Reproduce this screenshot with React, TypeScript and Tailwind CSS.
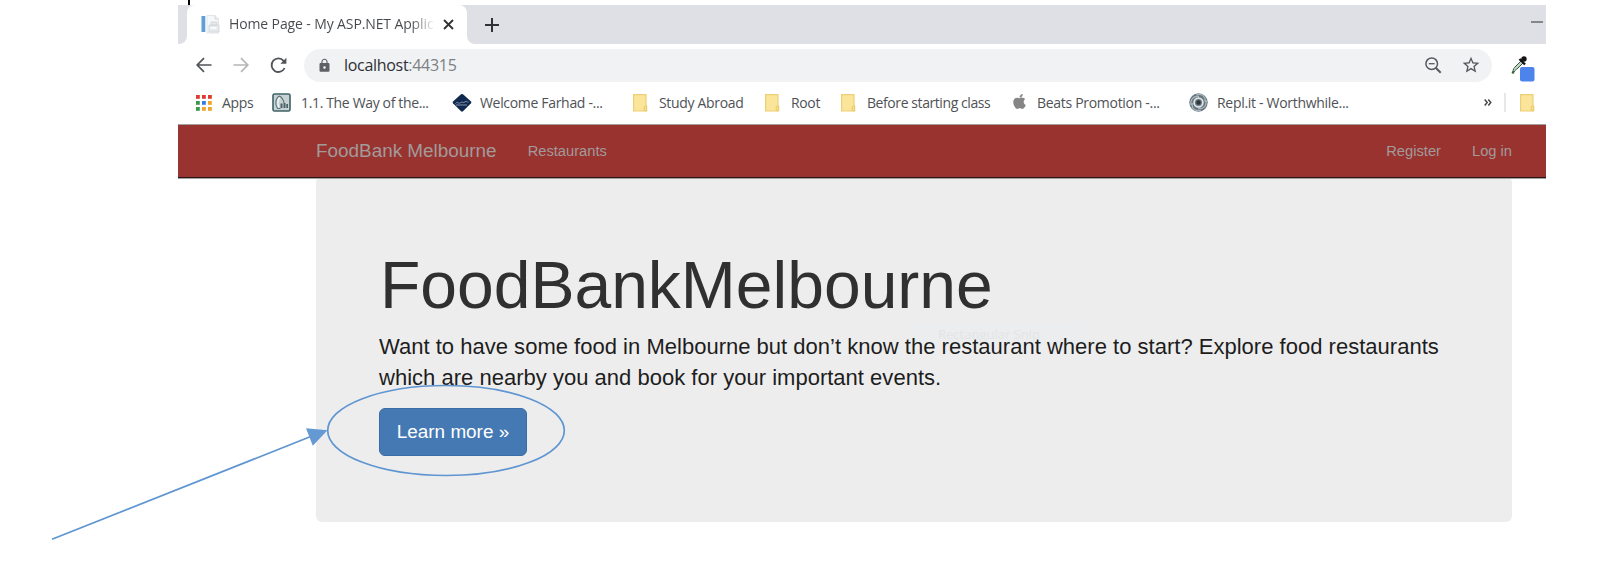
import type { ReactNode } from "react";
import { FaApple } from "react-icons/fa";
import { MdLock, MdStarBorder } from "react-icons/md";

function Folder() {
  return (
    <svg width="16" height="18" viewBox="0 0 16 18">
      <path d="M.6.600h12.400v11.400h.6v5H.6z" fill="#fbe59a" stroke="#ecd077" strokeWidth="1.200" />
      <path d="M11.200 12.500h2.400v4.200h-2.400z" fill="#f9df88" stroke="#e9cb69" strokeWidth=".9" />
    </svg>
  );
}

function AppsGrid() {
  const colors = ["#e0392f", "#e0392f", "#e0392f", "#3a9a4a", "#2f7de8", "#eda52b", "#3a9a4a", "#eda52b", "#eda52b"];
  return (
    <svg width="16" height="16" viewBox="0 0 16 16">
      {colors.map((c, i) => (
        <rect key={i} x={(i % 3) * 6} y={Math.floor(i / 3) * 6} width="3.8" height="3.8" fill={c} />
      ))}
    </svg>
  );
}

function PageIcon() {
  return (
    <svg width="19" height="19" viewBox="0 0 19 19">
      <path d="M6 .5h8l3.500 3.500v14H6z" fill="#f6f7f9" stroke="#e3e6e9" />
      <path d="M14 .5V4h3.500" fill="none" stroke="#d3d8dd" />
      <rect x=".5" y="1" width="3.800" height="16" fill="#5e9fd6" />
      <path d="M8 10h10v7H8zM10 7h6v3h-6z" fill="#e6e9ec" stroke="#d0d5da" strokeWidth=".8" />
      <path d="M9.500 13h6" stroke="#fff" strokeWidth="1.500" />
    </svg>
  );
}

function BookIcon() {
  return (
    <svg width="19" height="19" viewBox="0 0 19 19">
      <rect x="1" y="1" width="17" height="17" rx="1.500" fill="#c6d2d3" stroke="#406166" strokeWidth="1.600" />
      <path d="M7.500 3C3 5.500 3 12 5.500 15.500h3M7.500 3c2.500 1.500 4 4 4.500 7" fill="none" stroke="#5f7478" strokeWidth="1.100" />
      <path d="M7.500 4.500c-2 3-2 7-.5 10" fill="none" stroke="#f4f7f7" strokeWidth="1.400" />
      <path d="M8.500 10.500h2v4.500h-2zM11.500 10h2v5h-2zM14.300 11h1.700v4h-1.700z" fill="#4b6468" />
    </svg>
  );
}

function DiamondIcon() {
  return (
    <svg width="20" height="20" viewBox="0 0 20 20">
      <path d="M9 1.300q1-.8 2 0l8 7.200q.8.900 0 1.800l-8 8q-1 .9-2 0l-8-8q-.8-.9 0-1.800z" fill="#10294f" />
      <path d="M3.500 10.500c2-2.500 3 1 5-.8s2.500 1 4.500-.8 2 .8 3.500.2M4 12h11" fill="none" stroke="#8697ad" strokeWidth="1" />
    </svg>
  );
}

function SwirlIcon() {
  return (
    <svg width="19" height="19" viewBox="0 0 19 19">
      <circle cx="9.500" cy="9.500" r="9.200" fill="#66767f" />
      <path d="M2 12C1 6 5 2.500 10 3.500M7 2c6-2 10 2 9 7M17 7c1 6-3 9.500-8 8.500M12 17C6 19 2 15 3.500 10" fill="none" stroke="#aab7bd" strokeWidth="1.300" />
      <circle cx="9.500" cy="9.500" r="4.400" fill="#6a777d" stroke="#dfe5e7" strokeWidth="1.700" />
      <circle cx="9.500" cy="9.500" r="2.200" fill="#2c363b" />
    </svg>
  );
}

function Bookmark({ icon, cell, gutter, tracking, children }: { icon: ReactNode; cell: string; gutter: string; tracking: string; children: ReactNode }) {
  return (
    <div className={`flex shrink-0 items-center ${cell}`}>
      <span className={`flex shrink-0 items-center ${gutter}`}>{icon}</span>
      <span className={`mb-[1px] whitespace-nowrap ${tracking}`}>{children}</span>
    </div>
  );
}

function TabStrip() {
  return (
    <div className="flex h-[39px]">
      <div className="w-[9px] rounded-br-[8px] bg-[#dee0e5]" />
      <div className="flex h-full w-[280px] bg-[#dee0e5]">
        <div className="flex w-full items-center rounded-t-[8px] bg-white pl-[14px]">
          <PageIcon />
          <span className="mb-[2px] ml-[9px] w-[206px] overflow-hidden bg-linear-to-r from-[#45484c] from-88% to-white bg-clip-text text-[14px] tracking-[-0.12px] whitespace-nowrap text-transparent">
            Home Page - My ASP.NET Applic
          </span>
          <svg className="ml-[8px]" width="11" height="11" viewBox="0 0 11 11">
            <path d="m1 1 9 9M10 1l-9 9" stroke="#303236" strokeWidth="1.800" />
          </svg>
        </div>
      </div>
      <div className="flex flex-1 items-center justify-between rounded-bl-[8px] bg-[#dee0e5] pr-[3px] pl-[18px]">
        <svg width="14" height="14" viewBox="0 0 14 14">
          <path d="M7 0v14M0 7h14" stroke="#303236" strokeWidth="2" />
        </svg>
        <span className="mb-[6px] h-[2px] w-[12px] bg-[#85878a]" />
      </div>
    </div>
  );
}

function AddressBar() {
  return (
    <div className="flex h-[42px] items-center pl-[18px]">
      <svg className="shrink-0" width="16" height="16" viewBox="0 0 16 16" fill="none" stroke="#505357" strokeWidth="1.700">
        <path d="M15.500 8H1.500M8 1.200 1.200 8 8 14.800" />
      </svg>
      <svg className="ml-[21px] shrink-0" width="16" height="16" viewBox="0 0 16 16" fill="none" stroke="#b4b6b9" strokeWidth="1.700">
        <path d="M.5 8h14M8 1.200 14.800 8 8 14.800" />
      </svg>
      <svg className="ml-[21px] shrink-0" width="17" height="17" viewBox="0 0 17 17" fill="none" stroke="#505357" strokeWidth="1.800">
        <path d="M14.600 11A6.800 6.800 0 1 1 13.600 3.800L15 5.400" />
        <path d="M16.400.8v6h-6z" fill="#505357" stroke="none" />
      </svg>
      <div className="ml-[17px] flex h-[33px] w-[1188px] shrink-0 items-center rounded-full bg-[#f1f2f4] pl-[13px]">
        <MdLock className="size-[15px] text-[#5d6064]" />
        <span className="mb-[1px] ml-[12px] text-[16px] tracking-[-0.3px] text-[#2d3034]">
          localhost<span className="text-[#7d8084]">:44315</span>
        </span>
        <svg className="ml-auto" width="17" height="17" viewBox="0 0 17 17" fill="none" stroke="#55585c" strokeWidth="1.500">
          <circle cx="6.700" cy="6.700" r="5.800" />
          <path d="M3.800 6.700h5.800" strokeWidth="1.300" />
          <path d="m10.700 10.700 5 5" strokeWidth="2" />
        </svg>
        <MdStarBorder className="mr-[11px] ml-[19px] size-[20px] text-[#55585c]" />
      </div>
      <svg className="mt-[6px] ml-[19px] shrink-0" width="24" height="27" viewBox="0 0 24 27">
        <path d="M2 17c0-3 1-4 3-6l5-5 2 2-5 5c-2 2-3 2-4 4z" fill="#c3d6c6" stroke="#33583a" strokeWidth="1" />
        <circle cx="2" cy="17.500" r="1.300" fill="#2c6a38" />
        <path d="m8.500 4 5.500 5.500M10 6.500l3-3.500" stroke="#151515" strokeWidth="2.400" />
        <circle cx="13" cy="4" r="2.700" fill="#151515" />
        <rect x="9" y="12" width="14.500" height="14.500" rx="2" fill="#4c84ec" />
      </svg>
      <span className="mt-[16px] ml-[11px] size-[2px] shrink-0 bg-[#9a9a9a]" />
    </div>
  );
}

function BookmarksBar() {
  return (
    <div className="flex h-[38px] items-center pb-[5px] pl-[18px] text-[14px] text-[#4f5256]">
      <Bookmark cell="w-[76px]" gutter="w-[26px]" tracking="tracking-[-0.3px]" icon={<AppsGrid />}>Apps</Bookmark>
      <Bookmark cell="w-[180px]" gutter="w-[29px]" tracking="tracking-[-0.35px]" icon={<BookIcon />}>1.1. The Way of the...</Bookmark>
      <Bookmark cell="w-[181px]" gutter="w-[28px]" tracking="tracking-[-0.32px]" icon={<DiamondIcon />}>Welcome Farhad -...</Bookmark>
      <Bookmark cell="w-[132px]" gutter="w-[26px]" tracking="tracking-[-0.32px]" icon={<Folder />}>Study Abroad</Bookmark>
      <Bookmark cell="w-[76px]" gutter="w-[26px]" tracking="tracking-[-0.35px]" icon={<Folder />}>Root</Bookmark>
      <Bookmark cell="w-[171px]" gutter="w-[26px]" tracking="tracking-[-0.42px]" icon={<Folder />}>Before starting class</Bookmark>
      <Bookmark cell="w-[177px]" gutter="w-[25px]" tracking="tracking-[-0.3px]" icon={<FaApple className="mb-[2px] -ml-[1px] size-[17px] text-[#858585]" />}>Beats Promotion -...</Bookmark>
      <Bookmark cell="w-[295px]" gutter="w-[28px]" tracking="tracking-[-0.3px]" icon={<SwirlIcon />}>Repl.it - Worthwhile...</Bookmark>
      <svg width="8" height="7" viewBox="0 0 8 7" fill="none" stroke="#45484c" strokeWidth="1.500">
        <path d="m.7.5 2.500 3-2.500 3M4.300.5l2.500 3-2.500 3" />
      </svg>
      <span className="ml-[12px] h-[19px] w-[2px] bg-[#e6e7e8]" />
      <span className="ml-[14px]"><Folder /></span>
    </div>
  );
}

function SiteNav() {
  return (
    <nav className="flex h-[55px] items-center border-y border-[#a3a0a0] bg-[#983330] pr-[34px] pl-[138px] text-[14.700px] text-[#a39a9a] shadow-[inset_0_-1px_0_#2b1717]">
      <span className="text-[18.900px]">FoodBank Melbourne</span>
      <span className="ml-[31px]">Restaurants</span>
      <span className="ml-auto">Register</span>
      <span className="ml-[31px]">Log in</span>
    </nav>
  );
}

function Hero() {
  return (
    <section className="relative ml-[138px] h-[343px] w-[1196px] rounded-t-[3px] rounded-b-[6px] bg-[#ededed] pt-[70px] pl-[63px]">
      <div className="absolute top-[144px] left-[596px] h-[22px] w-[174px] bg-[#ebedee] pl-[26px] font-['Open_Sans',sans-serif] text-[13px] leading-[22px] text-[#e3e5e6]">
        Rectangular Snip
      </div>
      <h1 className="relative pl-[1px] text-[66px] leading-[73px] text-[#303030]">FoodBankMelbourne</h1>
      <p className="relative mt-[9px] text-[22px] leading-[31px] tracking-[0.015px] whitespace-nowrap text-[#1d1d1d]">
        Want to have some food in Melbourne but don’t know the restaurant where to start? Explore food restaurants
        <br />
        which are nearby you and book for your important events.
      </p>
      <button className="mt-[15px] flex h-[48px] w-[148px] items-center justify-center rounded-[6px] border border-[#3a6da5] bg-[#4579b3] text-[18.900px] text-white">
        Learn more »
      </button>
    </section>
  );
}

export default function App() {
  return (
    <div className="relative h-[562px] w-[1618px] overflow-hidden bg-white font-['Liberation_Sans',Arial,sans-serif]">
      <div className="ml-[188px] h-[5px] w-[2px] bg-black" />
      <main className="ml-[178px] w-[1368px]">
        <header className="overflow-hidden font-['Open_Sans','Noto_Sans',sans-serif]">
          <TabStrip />
          <AddressBar />
          <BookmarksBar />
        </header>
        <SiteNav />
        <Hero />
      </main>
      <svg className="pointer-events-none absolute inset-0" width="1618" height="562" viewBox="0 0 1618 562">
        <ellipse cx="446" cy="430.500" rx="118.300" ry="45" fill="none" stroke="#5f95d1" strokeWidth="1.700" />
        <path d="M52 539.300 312 436" stroke="#5f95d1" strokeWidth="1.700" />
        <path d="m327.500 430.300-21.500-2 6.800 17.500z" fill="#6599d3" />
      </svg>
    </div>
  );
}
